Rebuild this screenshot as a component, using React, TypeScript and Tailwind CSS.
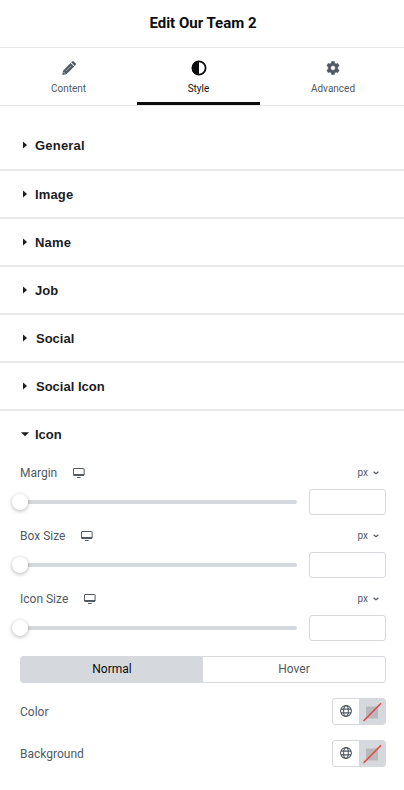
import { useState } from "react";

import clsx from "clsx";

const TABS = ["Content", "Style", "Advanced"];

const SECTIONS = [
    { text: "General", className: "h-[65px] pt-[17px] pl-[35px] tracking-[.2px]" },
    { text: "Image", className: "h-12 pt-[2px] pl-[35px] tracking-[.15px]" },
    { text: "Name", className: "h-12 pt-[2px] pl-[35px] tracking-[.2px]" },
    { text: "Job", className: "h-12 pt-[2px] pl-[35px]" },
    { text: "Social", className: "h-12 pt-[2px] pl-[35px]" },
    { text: "Social Icon", className: "h-12 pt-[2px] pl-[35px]" },
];

const SLIDERS = ["Margin", "Box Size", "Icon Size"];

const COLORS = ["Color", "Background"];

function TabIcon({ name }: { name: string }) {
    if (name === "Content") {
        return (
            <svg width="14" height="14" viewBox="0 0 14 14" fill="currentColor">
                <path d="M8.5 1.9 12.2 5.6 4.4 13.3 0.3 14 1 9.7Z" />
                <path d="M9.2 1.2 10.1.4Q11-.4 11.8.4L13.6 2.2Q14.4 3.1 13.6 4L12.8 4.9Z" />
                <path d="m3.8 10.3 5.4-5.4" stroke="white" strokeWidth=".5" fill="none" />
                <path d="m1.5 11 1.7 1.7" stroke="white" strokeWidth=".7" fill="none" />
            </svg>
        );
    }

    if (name === "Style") {
        return (
            <svg width="16" height="16" viewBox="0 0 16 16">
                <circle cx="8" cy="8" r="6.6" fill="none" stroke="currentColor" strokeWidth="1.8" />
                <path d="M8 .8a7.2 7.2 0 0 0 0 14.4Z" fill="currentColor" />
            </svg>
        );
    }

    return (
        <svg width="14" height="14" viewBox="0 0 14 14" fill="currentColor">
            <path
                fillRule="evenodd"
                stroke="currentColor"
                strokeWidth=".6"
                strokeLinejoin="round"
                d="M5.7.4h2.6l.4 1.8 1.3.8 1.8-.6 1.3 2.3-1.4 1.2v2.2l1.4 1.2-1.3 2.3-1.8-.6-1.3.8-.4 1.8H5.7l-.4-1.8L4 11l-1.8.6L.9 9.3l1.4-1.2V5.9L.9 4.7l1.3-2.3L4 3l1.3-.8ZM7 4.6a2.4 2.4 0 1 0 0 4.8 2.4 2.4 0 0 0 0-4.8Z"
            />
        </svg>
    );
}

function DesktopIcon() {
    return (
        <svg width="12" height="10" viewBox="0 0 12 10" fill="none">
            <rect x=".5" y=".5" width="10.6" height="7" rx=".5" stroke="#515962" />
            <path d="M1 7h10" stroke="#515962" strokeWidth="2" />
            <path d="M4 9.5h3.6" stroke="#515962" />
        </svg>
    );
}

function GlobeIcon() {
    return (
        <svg width="12" height="12" viewBox="0 0 12 12" fill="none" stroke="#515962" strokeWidth="1.1">
            <circle cx="6" cy="6" r="5.4" />
            <ellipse cx="6" cy="6" rx="2.4" ry="5.4" />
            <path d="M1 4.1h10M1 7.9h10" />
        </svg>
    );
}

function SliderControl({ label }: { label: string }) {
    return (
        <div className="h-[63px]">
            <div className="flex h-5 items-center">
                <span>{label}</span>
                <span className="ml-4"><DesktopIcon /></span>
                <button className="mr-[7px] ml-auto flex items-center gap-[5px] text-[10px]">
                    px
                    <svg width="6" height="4" viewBox="0 0 6 4" fill="none" stroke="currentColor" strokeWidth="1.2">
                        <path d="m.6.7 2.4 2 2.4-2" />
                    </svg>
                </button>
            </div>
            <div className="mt-[6px] flex items-center gap-3">
                <div className="-ml-2 flex flex-1 items-center">
                    <div className="z-[1] size-4 rounded-full bg-white shadow-[0_1px_4px_rgba(0,0,0,.3)]"></div>
                    <div className="h-1 flex-1 rounded-r-[2px] bg-[#d5d8dc]"></div>
                </div>
                <input aria-label={label} className="h-[26px] w-[77px] rounded-[3px] border border-[#d5d8dc] px-2 outline-none" />
            </div>
        </div>
    );
}

function ColorControl({ label }: { label: string }) {
    return (
        <div className="flex h-[27px] items-center justify-between">
            <span>{label}</span>
            <div className="flex h-[27px] w-[54px] overflow-hidden rounded-[3px] border border-[#d5d8dc]">
                <button aria-label="Global colors" className="flex w-[26px] items-center justify-center pb-px"><GlobeIcon /></button>
                <button aria-label="Pick color" className="flex flex-1 items-center justify-center bg-[#d5d8dc]">
                    <svg width="20" height="20" viewBox="0 0 20 20">
                        <path d="M4 4.5h12v12H4Z" fill="#b7b9bb" />
                        <path d="M1.5 19 19 1.2" stroke="#e5464a" strokeWidth="1.6" />
                    </svg>
                </button>
            </div>
        </div>
    );
}

export default function App() {
    const [tab, setTab] = useState("Style");
    const [mode, setMode] = useState("Normal");

    return (
        <div className="h-[790px] w-[404px] overflow-hidden bg-white font-['Roboto',sans-serif] text-xs text-[#515962]">
            <header className="flex h-12 items-center justify-center border-b border-[#e6e8ea] pl-[2px] text-[15px] font-bold text-[#0c0d0e]">
                Edit Our Team 2
            </header>
            <nav className="flex h-[58px] border-b border-[#e6e8ea]">
                {
                    TABS.map((name) => (
                        <button
                            key={name}
                            onClick={() => setTab(name)}
                            className={clsx(
                                "flex flex-col items-center border-b-[3px] pt-3 text-[10px]",
                                name === "Style" ? "w-[123px]" : name === "Content" ? "w-[137px]" : "w-[144px] pl-[2px]",
                                tab === name ? "border-[#0c0d0e] text-[#0c0d0e]" : "border-transparent text-[#515962]"
                            )}
                        >
                            <span className="flex h-4 items-center"><TabIcon name={name} /></span>
                            <span className="mt-[5px] leading-[15px]">{name}</span>
                        </button>
                    ))
                }
            </nav>
            {
                SECTIONS.map(({ text, className }) => (
                    <div key={text} className={clsx("flex items-center border-b-2 border-[#e6e8ea] font-['Liberation_Sans',sans-serif] text-[13px] font-bold text-[#1b1c1e]", className)}>
                        <svg className="-mt-[3px] -ml-[12px] mr-2" width="4" height="8" viewBox="0 0 4 8">
                            <path d="M0 .5 4 4 0 7.5Z" fill="currentColor" />
                        </svg>
                        <span className={clsx(text.startsWith("Social") && "pl-px")}>{text}</span>
                    </div>
                ))
            }
            <section className="pr-[18px] pl-5">
                <div className="flex h-[52px] items-center pb-1 font-['Liberation_Sans',sans-serif] text-[13px] font-bold text-[#1b1c1e]">
                    <svg className="-mt-px mr-[6px] ml-[1px]" width="8" height="5" viewBox="0 0 8 5">
                        <path d="M0 .3h8L4 4.3Z" fill="currentColor" />
                    </svg>
                    Icon
                </div>
                {SLIDERS.map((label) => <SliderControl key={label} label={label} />)}
                <div className="mt-1 flex h-[27px] overflow-hidden rounded-[3px] border border-[#d5d8dc]">
                    {
                        ["Normal", "Hover"].map((name) => (
                            <button
                                key={name}
                                onClick={() => setMode(name)}
                                className={clsx("flex-1 pb-[2px]", mode === name && "bg-[#d5d8dc] text-[#0c0d0e]")}
                            >{name}</button>
                        ))
                    }
                </div>
                <div className="mt-[15px] flex flex-col gap-[15px]">
                    {COLORS.map((label) => <ColorControl key={label} label={label} />)}
                </div>
            </section>
        </div>
    )
}
